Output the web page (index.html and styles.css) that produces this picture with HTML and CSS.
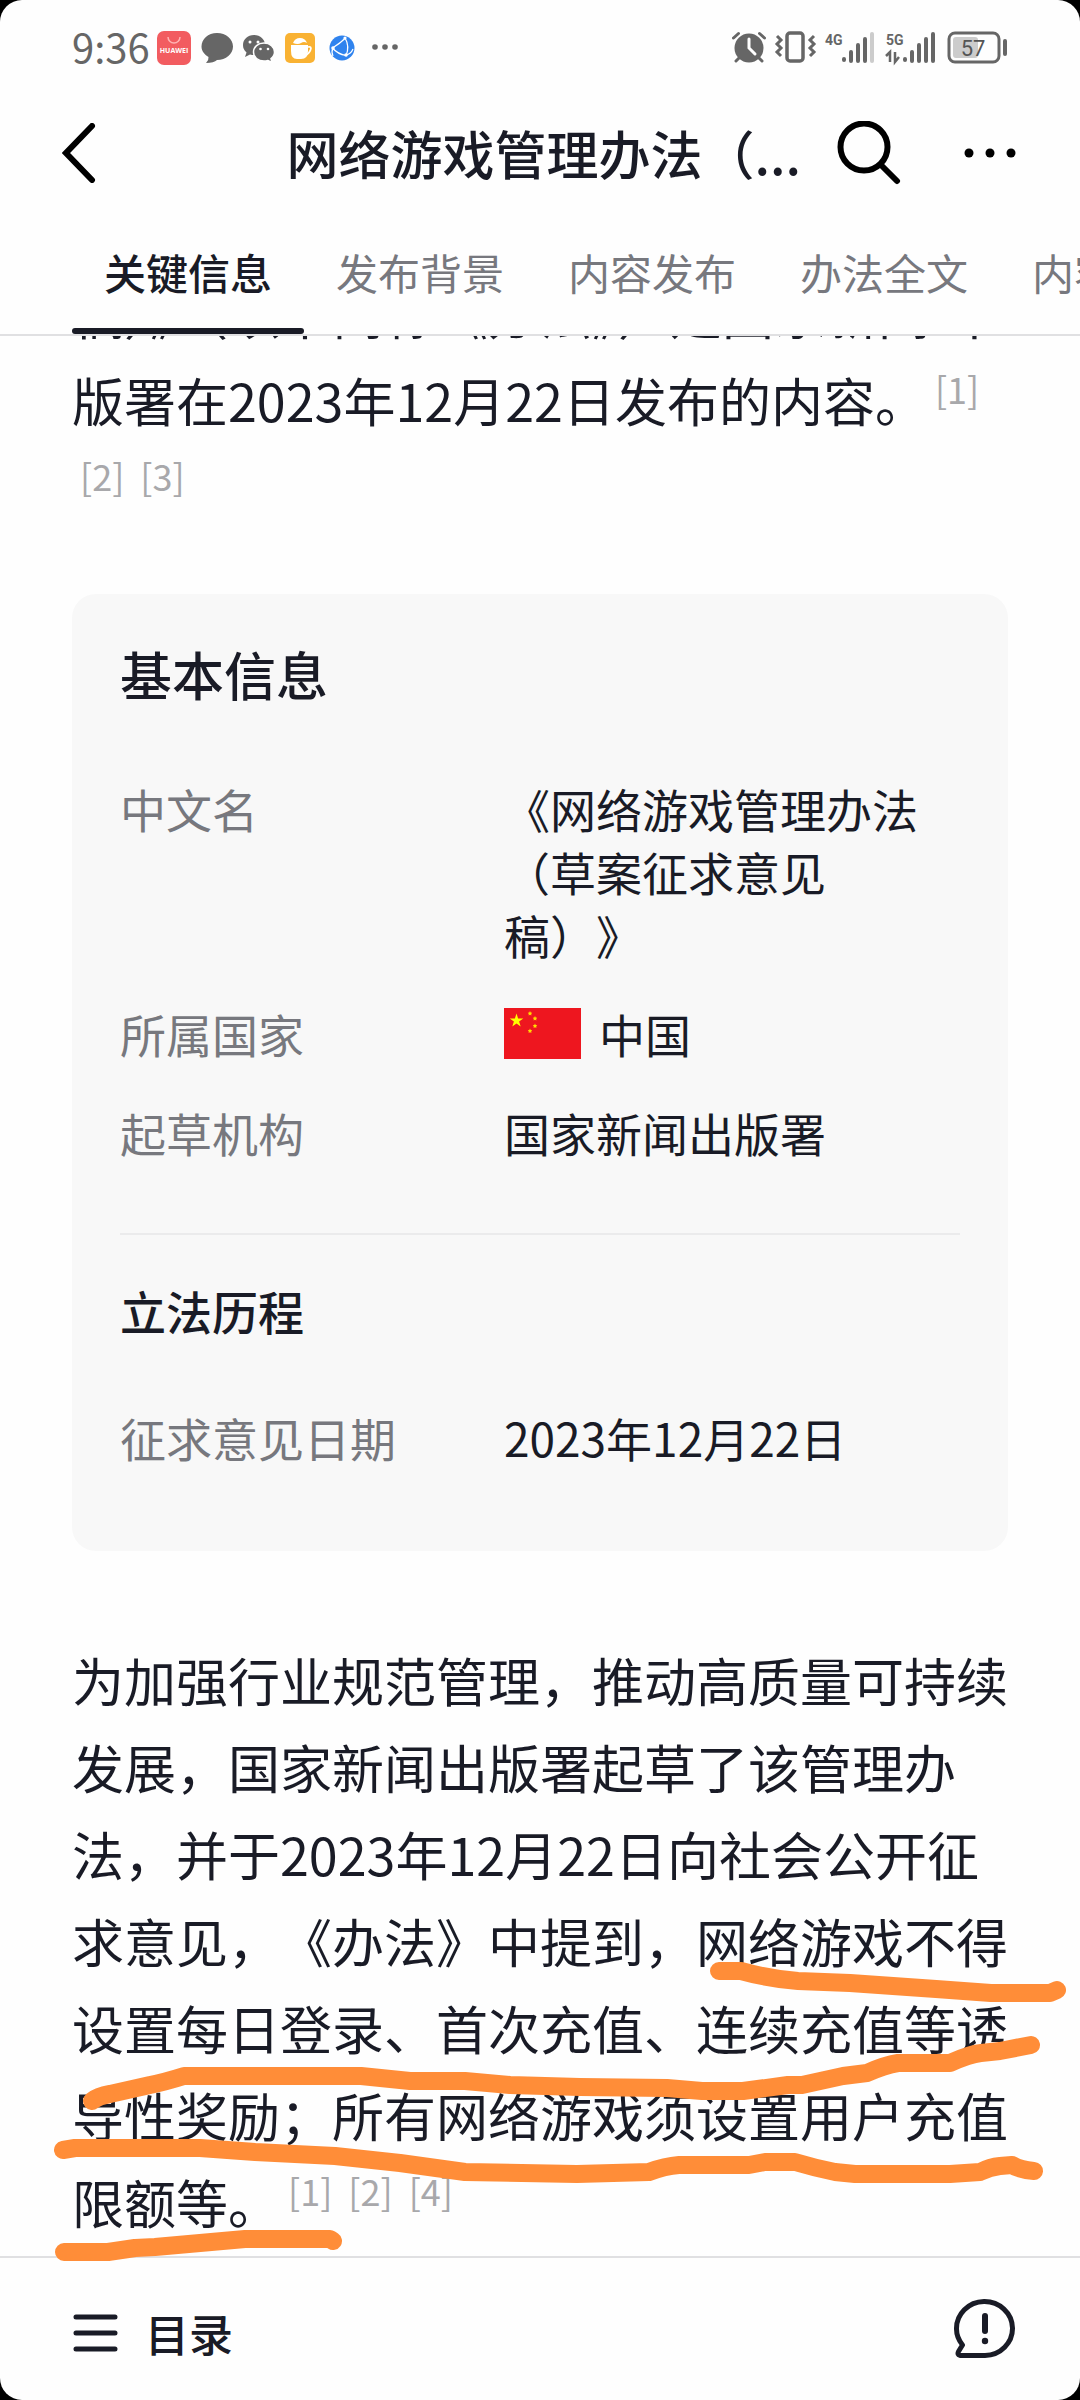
FILE: index.html
```html
<!DOCTYPE html>
<html lang="zh-CN">
<head>
    <meta charset="UTF-8">
    <meta name="viewport" content="width=device-width, initial-scale=1.0">
    <title>网络游戏管理办法（草案征求意见稿）</title>
    <link rel="stylesheet" href="styles.css">
</head>
<body>

    <div class="page">
        <div class="status-bar">
            <div class="status-left">
                <span class="time">9:36</span>
                <svg class="status-apps" width="244" height="36" viewBox="0 0 244 36">
                    <!-- Huawei -->
                    <rect x="0" y="1" width="34" height="34" rx="7" fill="#f25c60"/>
                    <path d="M11 7a6 6 0 0 0 12 0" fill="none" stroke="#ffb3b3" stroke-width="1.5"/>
                    <text x="17" y="23" text-anchor="middle" class="app-name">HUAWEI</text>
                    <!-- sms -->
                    <path d="M60 3c9 0 16 6 16 13.500s-7 13.500-16 13.500q-3 3-11 3q3-3 2.500-6c-4-2.500-7-6-7-10.500C44.500 9 51 3 60 3z" fill="#666"/>
                    <!-- wechat -->
                    <path d="M97 5c6.500 0 11 4.500 11 10s-5 10-11 10q-2 0-4-.6l-5 2.500 1.500-4.500C87 20.500 86 18 86 15 86 9.500 90.500 5 97 5z" fill="#666"/>
                    <path d="M107 13c6 0 10.500 4 10.500 9 0 2.500-1.500 5-3.500 6.500l1 4-4-2q-2 .6-4 .6c-6 0-10.500-4-10.500-9s4.500-9.100 10.500-9.100z" fill="#666" stroke="#fff" stroke-width="1.500"/>
                    <g fill="#fff"><circle cx="93" cy="12" r="1.500"/><circle cx="101" cy="12" r="1.500"/><circle cx="103.500" cy="19" r="1.300"/><circle cx="111" cy="19" r="1.300"/></g>
                    <!-- cup -->
                    <rect x="128" y="3" width="30" height="30" rx="5" fill="#f9b233"/>
                    <path d="M134 15h17v6q0 8-7 8h-4q-6 0-6-8z" fill="#fff"/>
                    <path d="M151 17q4-1 2.500 3t-5 5" fill="none" stroke="#fff" stroke-width="1.800"/>
                    <path d="M136 13q2-5 7-5t7 5q-3-2-6 0t-8 0z" fill="#fff"/>
                    <!-- browser -->
                    <circle cx="185" cy="18" r="12.500" fill="#2f83ee"/>
                    <path d="M188 8q5 8 1 18M175.500 18q8-5 13-10M175.500 18q5 6 13.500 7.500M189 25q5-1 7-6M176 18q-2 4 0 8" fill="none" stroke="#fff" stroke-width="1.200"/>
                    <g fill="#fff"><circle cx="176" cy="18" r="1.800"/><circle cx="188" cy="8" r="1.600"/><circle cx="189" cy="25" r="1.800"/></g>
                    <g fill="#666"><circle cx="218" cy="17" r="2.800"/><circle cx="228" cy="17" r="2.800"/><circle cx="238" cy="17" r="2.800"/></g>
                </svg>
            </div>
            <svg class="status-icons" width="276" height="36" viewBox="732 30 276 36">
                <!-- alarm -->
                <circle cx="749" cy="48" r="14.500" fill="#666"/>
                <path d="M749 39v9l6 6" fill="none" stroke="#fff" stroke-width="3" stroke-linecap="round"/>
                <path d="M733.500 38l5-4.500M764.500 38l-5-4.500M739 58l-3 3M759 58l3 3" stroke="#666" stroke-width="3" stroke-linecap="round"/>
                <!-- vibrate -->
                <rect x="787" y="33" width="16" height="28" rx="3" fill="none" stroke="#666" stroke-width="3.500"/>
                <path d="M777 36l4 4-4 4 4 4-4 4 4 4M814 36l-4 4 4 4-4 4 4 4-4 4" fill="none" stroke="#666" stroke-width="3"/>
                <!-- signal 4G -->
                <text x="825" y="45" class="net">4G</text>
                <g stroke="#666" stroke-width="4" stroke-linecap="round">
                    <path d="M844 59v1M851 52v9M858 45v16M865 39v22"/>
                    <path d="M872 34v27" stroke="#ccc"/>
                    <path d="M905 59v1M912 52v9M919 45v16M926 39v22M933 34v27"/>
                </g>
                <!-- signal 5G -->
                <text x="886" y="45" class="net">5G</text>
                <path d="M886 56l4-4v10M895 52v10l4-5" fill="none" stroke="#666" stroke-width="2.500"/>
                <!-- battery -->
                <rect x="949" y="33" width="50" height="29" rx="6" fill="none" stroke="#666" stroke-width="3"/>
                <rect x="953" y="37" width="25" height="21" rx="3" fill="#ccc"/>
                <path d="M1005 41v13" stroke="#666" stroke-width="4" stroke-linecap="round"/>
                <text x="973" y="56" text-anchor="middle" class="charge">57</text>
            </svg>
        </div>

        <header class="header">
            <button class="icon-btn back" aria-label="返回">
                <svg width="36" height="60" viewBox="0 0 36 60"><path d="M30 3L4 30l26 27" fill="none" stroke="#000" stroke-width="6" stroke-linecap="round"/></svg>
            </button>
            <h1 class="title">网络游戏管理办法（...</h1>
            <button class="icon-btn" aria-label="搜索">
                <svg width="64" height="64" viewBox="0 0 64 64"><circle cx="27" cy="26" r="23.500" fill="none" stroke="#000" stroke-width="6"/><path d="M44 44l16 16" stroke="#000" stroke-width="6" stroke-linecap="round"/></svg>
            </button>
            <button class="icon-btn more" aria-label="更多">
                <svg width="52" height="60" viewBox="0 0 52 60"><circle cx="5" cy="30" r="4.500"/><circle cx="26" cy="30" r="4.500"/><circle cx="47" cy="30" r="4.500"/></svg>
            </button>
        </header>

        <nav class="tabs">
            <a class="tab active" href="#">关键信息</a>
            <a class="tab" href="#">发布背景</a>
            <a class="tab" href="#">内容发布</a>
            <a class="tab" href="#">办法全文</a>
            <a class="tab" href="#">内容解读</a>
        </nav>

        <main class="content">
            <p class="text intro"><span class="tight">稿）》（以下简称《办法》）是国家新闻出</span><br>版署在2023年12月22日发布的内容。<a class="ref" href="#">[1]</a><wbr><a class="ref" href="#">[2]</a><wbr><a class="ref" href="#">[3]</a></p>

            <section class="card">
                <h2>基本信息</h2>
                <dl class="info">
                    <dt>中文名</dt>
                    <dd>《网络游戏管理办法（草案征求意见稿）》</dd>
                    <dt>所属国家</dt>
                    <dd class="country">
                        <svg width="77" height="51" viewBox="0 0 77 51">
                            <rect width="77" height="51" fill="#ee161f"/>
                            <path d="M12.500 5.500l1.600 4.900h5.200l-4.200 3.100 1.600 5-4.200-3.100-4.200 3.100 1.600-5-4.200-3.100h5.200z" fill="#ff0"/>
                            <g fill="#fd0"><path d="M26 3l.7 1.500 1.500.2-1 1.200.2 1.600-1.400-.8-1.400.8.2-1.600-1-1.200 1.500-.2z"/><path d="M31 8l.7 1.500 1.500.2-1 1.200.2 1.600-1.400-.8-1.400.8.2-1.600-1-1.200 1.500-.2z"/><path d="M31 15.500l.7 1.500 1.500.2-1 1.200.2 1.600-1.400-.8-1.400.8.2-1.600-1-1.200 1.500-.2z"/><path d="M26 20.500l.7 1.500 1.500.2-1 1.200.2 1.600-1.400-.8-1.400.8.2-1.600-1-1.200 1.500-.2z"/></g>
                        </svg>
                        中国
                    </dd>
                    <dt>起草机构</dt>
                    <dd>国家新闻出版署</dd>
                </dl>
                <h3>立法历程</h3>
                <dl class="info">
                    <dt>征求意见日期</dt>
                    <dd>2023年12月22日</dd>
                </dl>
            </section>

            <p class="text">为加强行业规范管理，推动高质量可持续发展，国家新闻出版署起草了该管理办法，并于2023年12月22日向社会公开征求意见，《办法》中提到，网络游戏不得设置每日登录、首次充值、连续充值等诱导性奖励；所有网络游戏须设置用户充值限额等。<a class="ref" href="#">[1]</a><wbr><a class="ref" href="#">[2]</a><wbr><a class="ref" href="#">[4]</a></p>
        </main>

        <footer class="bottom-bar">
            <button class="toc">
                <svg width="46" height="38" viewBox="0 0 46 38"><path d="M4 3h39M4 19h39M4 35h39" stroke="#191b26" stroke-width="5" stroke-linecap="round"/></svg>
                目录
            </button>
            <button class="icon-btn" aria-label="反馈">
                <svg width="62" height="60" viewBox="0 0 62 60" fill="none" stroke="#191b26" stroke-width="5" stroke-linecap="round" stroke-linejoin="round">
                    <path d="M32 56.500H7q-3-1-1.500-4l4-6.500C5.500 41 3.500 36 3.500 30a28 27 0 1 1 28.500 26.500"/>
                    <path d="M32 17v15" stroke-width="6"/>
                    <circle cx="32" cy="42" r="3.200" fill="#191b26" stroke="none"/>
                </svg>
            </button>
        </footer>

        <!-- marker lines drawn over the article -->
        <svg class="marker" viewBox="0 0 1080 2400">
            <path d="M719 1971L741 1971Q770 1979 798 1981L850 1983L936 1989L991 1993L1050 1993L1057 1990"/>
            <path d="M92 2101Q98 2096 110 2094L150 2085Q165 2082 184 2076L361 2076L410 2081L465 2081L510 2085L580 2087L667 2088L702 2091L743 2091L788 2085L802 2085L843 2076L867 2073Q885 2065 898 2063L950 2063Q970 2054 981 2053L1000 2051L1031 2045"/>
            <path d="M63 2150L75 2148L200 2148L255 2152L335 2156L400 2163L465 2172L577 2174L649 2172Q665 2166 679 2165L749 2165L765 2162L795 2162Q815 2168 835 2172L855 2174L950 2174L980 2172Q990 2167 1000 2166L1012 2165Q1020 2170 1034 2171"/>
            <path d="M64 2252L108 2252L135 2248L155 2247L245 2239L330 2239L333 2241"/>
        </svg>
    </div>

</body>
</html>
```

FILE: styles.css
```css
* { margin: 0; padding: 0; box-sizing: border-box; }
body { background: #000; color: #191b26; font-family: "Noto Sans CJK SC", sans-serif; text-spacing-trim: space-all; }
a { color: inherit; text-decoration: none; }
button { background: none; border: none; font: inherit; color: inherit; cursor: pointer; }
svg { display: block; flex: none; }
.page { position: relative; display: flex; flex-direction: column; height: 100vh; background: #fefefe; border-radius: 22px; overflow: hidden; }

.status-bar { display: flex; justify-content: space-between; align-items: center; height: 96px; padding: 0 72px; color: #666; flex: none; }
.status-left { display: flex; align-items: center; gap: 7px; }
.time { padding-bottom: 4px; font-size: 40px; line-height: 48px; }
.app-name { font: bold 7px "Open Sans", sans-serif; fill: #fff; }
.net { font: bold 14px Roboto, sans-serif; fill: #666; }
.charge { font: 22px Roboto, sans-serif; fill: #555; }

.header { display: flex; align-items: center; height: 114px; padding: 0 64px 0 62px; flex: none; }
.icon-btn svg { fill: #000; }
.title { flex: 1; padding-right: 36px; font-size: 52px; font-weight: 500; line-height: 64px; text-align: right; white-space: nowrap; }
.more { margin-left: 63px; }

.tabs { display: flex; height: 126px; padding-left: 72px; border-bottom: 2px solid #e0e0e2; overflow: hidden; flex: none; }
.tab { flex: none; padding: 30px 32px 0; font-size: 42px; line-height: 64px; color: #77787e; }
.tab.active { color: #191b26; font-weight: 500; position: relative; }
.tab.active::after { content: ""; position: absolute; left: 0; right: 0; bottom: 0; height: 6px; border-radius: 3px; background: #191b26; }

.content { flex: 1; min-height: 0; padding: 0 72px; overflow: hidden; }
.text { font-size: 52px; line-height: 87px; }
.intro { margin-top: -67px; }
.tight { text-spacing-trim: normal; white-space: nowrap; }
.ref { display: inline-block; padding: 0 8px; font-size: 36px; line-height: 40px; color: #a8a8ab; vertical-align: 18px; }

.card { margin: 64px 0 85px; padding: 41px 48px 82px; background: #f8f8f8; border-radius: 24px; }
.card h2 { margin-bottom: 64px; font-size: 52px; font-weight: 500; line-height: 78px; }
.card h3 { margin: 69px 0 64px; padding-top: 43px; border-top: 2px solid #ebebec; font-size: 46px; font-weight: 500; line-height: 64px; }
.info { display: grid; grid-template-columns: 384px 1fr; row-gap: 36px; font-size: 46px; line-height: 63px; }
.info dt { color: #77787e; }
.country { display: flex; align-items: center; gap: 18px; }

.bottom-bar { display: flex; justify-content: space-between; align-items: center; height: 144px; padding: 0 65px 0 72px; border-top: 2px solid #e0e0e2; flex: none; }
.bottom-bar .icon-btn svg { fill: none; }
.toc { display: flex; align-items: center; gap: 27px; padding-top: 8px; font-size: 44px; font-weight: 500; line-height: 64px; }

.marker { position: absolute; top: 0; left: 0; width: 100%; pointer-events: none; }
.marker path { fill: none; stroke: #ff8d38; stroke-width: 18; stroke-linecap: round; stroke-linejoin: round; }
```
